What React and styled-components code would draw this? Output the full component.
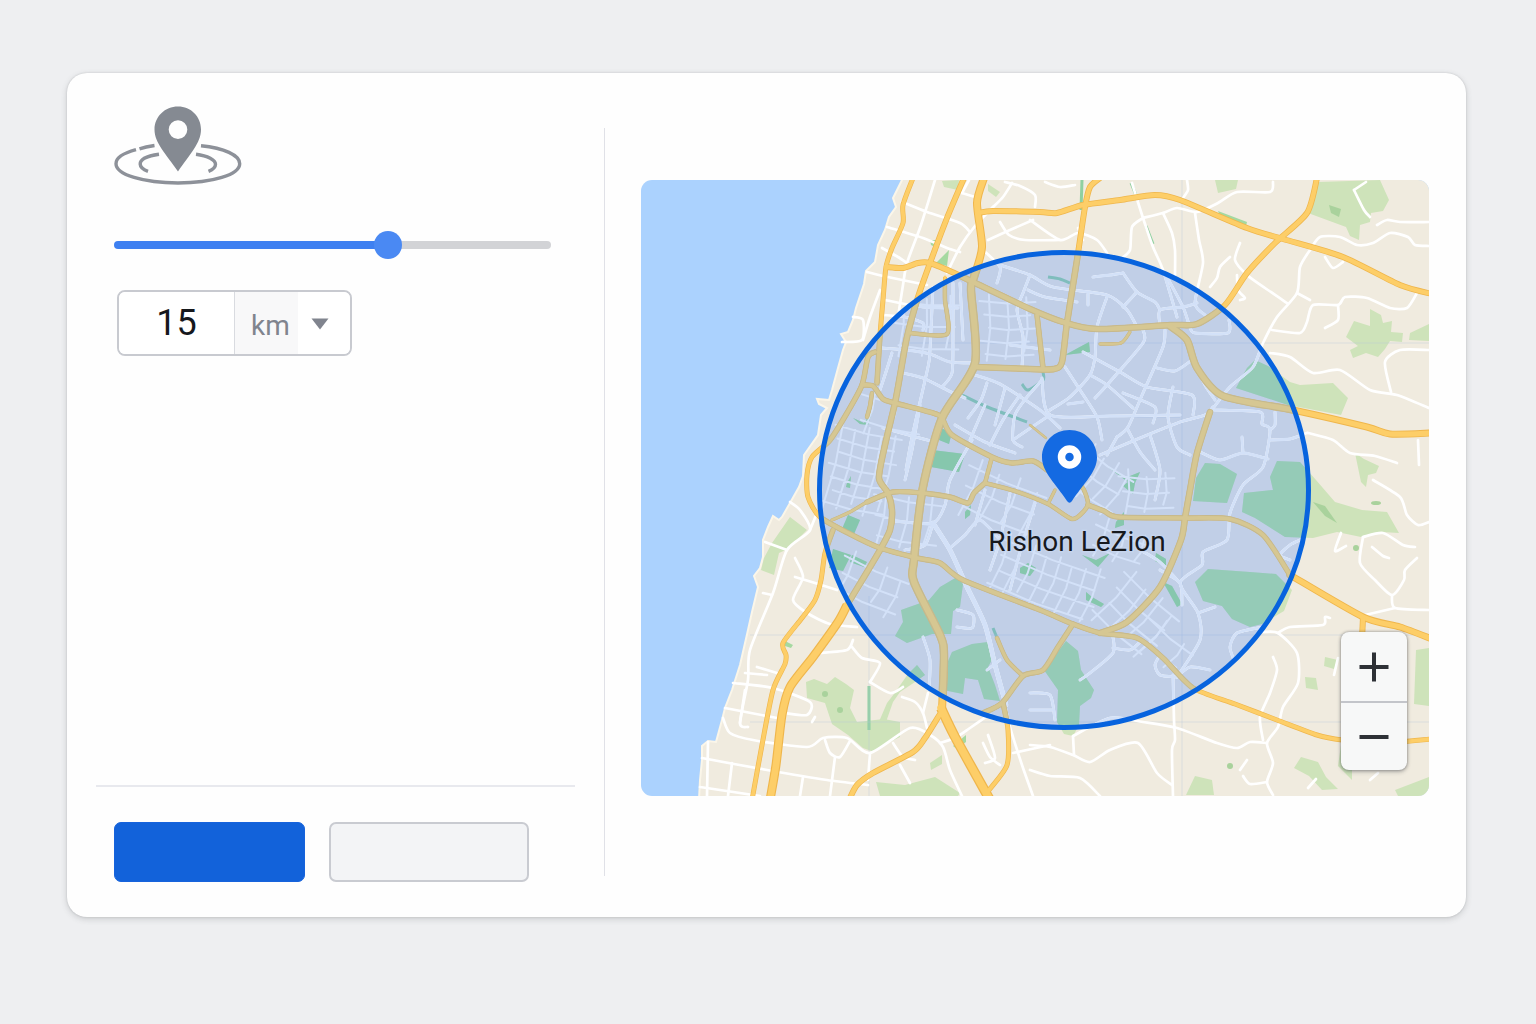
import React, { useState } from 'react';
import styled, { createGlobalStyle } from 'styled-components';

const GlobalStyle = createGlobalStyle`
  * {
    box-sizing: border-box;
  }

  body {
    margin: 0;
    background: #eeeff1;
    font-family: Roboto, "Liberation Sans", sans-serif;
  }
`;

const Page = styled.main`
  padding: 73px 70px 73px 67px;
`;

const Card = styled.section`
  display: grid;
  grid-template-columns: minmax(0, 537fr) 1px minmax(0, 861fr);
  background: #fefefe;
  border-radius: 20px;
  box-shadow: 0 0 2px rgba(60, 64, 72, 0.2), 0 2px 6px rgba(60, 64, 72, 0.2);
`;

const Settings = styled.form`
  display: flex;
  flex-direction: column;
  padding: 33px 29px 35px;
`;

const Fields = styled.div`
  flex: 1;
  display: flex;
  flex-direction: column;
  align-items: flex-start;
  padding: 0 24px 0 18px;
`;

const RadiusDrawing = styled.svg`
  display: block;
  width: 128px;
  height: 80px;
  margin-bottom: 45px;
`;

const Slider = styled.input`
  appearance: none;
  width: 100%;
  height: 28px;
  margin: 0 0 31px;
  background: none;
  cursor: pointer;

  &::-webkit-slider-runnable-track {
    height: 8px;
    border-radius: 4px;
    background: linear-gradient(to right, #3e80f1 var(--filled), #d2d3d6 var(--filled));
  }

  &::-webkit-slider-thumb {
    appearance: none;
    width: 28px;
    height: 28px;
    margin-top: -10px;
    border-radius: 50%;
    background: #4a89f3;
  }
`;

const Distance = styled.div`
  display: flex;
  width: 235px;
  height: 66px;
  margin-left: 3px;
  border: 2px solid #c8cad0;
  border-radius: 8px;
  overflow: hidden;
`;

const Amount = styled.input`
  appearance: textfield;
  width: 116px;
  padding: 0;
  border: none;
  border-right: 1px solid #d9dbe0;
  background: #ffffff;
  color: #16181c;
  font: 400 36px/40px Roboto, sans-serif;
  text-align: center;

  &::-webkit-inner-spin-button {
    appearance: none;
    display: none;
  }
`;

const UnitField = styled.div`
  position: relative;
  flex: 1;
`;

const Unit = styled.select`
  appearance: none;
  width: 100%;
  height: 100%;
  padding: 6px 0 0 16px;
  border: none;
  background: linear-gradient(to right, #f8f8f9 63px, #ffffff 63px);
  color: #80848e;
  font: 400 28px/32px Roboto, sans-serif;
`;

const Caret = styled.svg`
  position: absolute;
  top: 26px;
  right: 21px;
  width: 18px;
  height: 12px;
  pointer-events: none;
`;

const Actions = styled.div`
  display: flex;
  gap: 24px;
  padding: 35px 18px 0;
  border-top: 2px solid #e8e9ee;
`;

const ActionButton = styled.button`
  width: ${props => (props.$primary ? 191 : 200)}px;
  height: 60px;
  border: ${props => (props.$primary ? '1px solid #1763dc' : '2px solid #c9cbd1')};
  border-radius: 7px;
  background: ${props => (props.$primary ? '#1262da' : '#f3f4f6')};
  cursor: pointer;
`;

const Divider = styled.div`
  margin: 55px 0 41px;
  background: #e0e1e7;
`;

const MapPanel = styled.div`
  padding: 107px 37px 121px 36px;
`;

const MapFrame = styled.div`
  position: relative;
  border-radius: 11px;
  overflow: hidden;
`;

const MapDrawing = styled.svg`
  display: block;
  width: 100%;
  height: auto;
`;

const ZoomControls = styled.div`
  position: absolute;
  right: 22px;
  bottom: 26px;
  display: flex;
  flex-direction: column;
  width: 66px;
  border-radius: 8px;
  background: #f7f8f8;
  box-shadow: 0 0 3px rgba(50, 54, 60, 0.5), 0 2px 4px rgba(50, 54, 60, 0.3);
`;

const ZoomButton = styled.button`
  display: flex;
  align-items: center;
  justify-content: center;
  height: 69px;
  padding: 0;
  border: none;
  background: none;
  cursor: pointer;

  & + & {
    border-top: 2px solid #c3c5ca;
  }
`;

/* Map geometry. Every road is a flat "x,y x,y ..." list. */

const LAND =
  'M902,180 L893,198 L896,207 L889,217 L885,230 L878,245 L875,262 L866,271 L864,284 L856,308 L853,320 L848,332 L841,334 L846,342 L843,350 L838,368 L832,390 L829,400 L817,399 L819,404 L827,408 L821,415 L818,435 L804,455 L803,476 L799,487 L790,503 L782,517 L779,520 L773,516 L768,527 L763,540 L763,557 L760,568 L754,576 L758,587 L752,612 L748,630 L740,665 L732,690 L725,708 L722,720 L716,742 L708,741 L702,746 L702,760 L700,780 L699,800 L1432,800 L1432,176 L904,176 Z';

const PARKS = [
  'M1318,182 L1380,180 L1389,200 L1383,211 L1371,213 L1370,222 L1360,225 L1359,240 L1350,236 L1346,227 L1308,213 Z',
  'M1215,180 L1238,180 L1236,189 L1218,193 Z',
  'M942,181 L959,180 L958,190 L944,187 Z',
  'M988,184 L1000,192 L996,197 L988,191 Z',
  'M1370,309 L1381,315 L1383,323 L1392,321 L1391,332 L1403,333 L1402,342 L1390,341 L1385,349 L1378,357 L1366,353 L1353,358 L1350,350 L1358,346 L1346,337 L1354,321 L1370,326 Z',
  'M1410,333 L1429,324 L1429,341 L1409,340 Z',
  'M1255,360 L1268,366 L1290,382 L1300,385 L1333,383 L1348,398 L1341,415 L1288,405 L1236,388 L1247,368 Z',
  'M1205,463 L1220,464 L1237,474 L1227,503 L1193,501 L1196,478 Z',
  'M1277,461 L1300,462 L1316,480 L1335,502 L1362,510 L1387,512 L1399,533 L1382,532 L1361,537 L1337,532 L1313,538 L1285,537 L1255,518 L1242,512 L1244,493 L1273,490 L1270,477 Z',
  'M1208,569 L1250,572 L1276,574 L1292,590 L1284,611 L1262,624 L1250,627 L1232,619 L1222,606 L1203,601 L1195,582 Z',
  'M790,517 L807,530 L788,549 L779,553 L774,575 L761,570 L764,558 L772,543 Z',
  'M957,577 L963,584 L960,607 L953,611 L951,634 L932,634 L907,643 L895,636 L903,622 L901,610 L929,600 L940,587 Z',
  'M952,652 L972,644 L988,642 L993,658 L988,667 L995,685 L1000,701 L984,699 L978,680 L965,678 L963,694 L943,690 L945,668 Z',
  'M806,682 L814,679 L827,684 L835,677 L846,684 L854,690 L850,708 L857,722 L884,719 L900,722 L900,737 L886,744 L874,752 L863,748 L848,735 L832,724 L825,703 L807,698 Z',
  'M878,724 L887,703 L894,694 L908,674 L917,665 L925,675 L915,682 L900,692 L893,702 L886,722 Z',
  'M1066,641 L1078,651 L1081,670 L1094,690 L1091,698 L1080,706 L1079,725 L1073,736 L1064,734 L1057,722 L1058,690 L1044,670 Z',
  'M1301,757 L1318,762 L1326,777 L1338,789 L1322,790 L1309,776 L1294,768 Z',
  'M1195,776 L1212,780 L1214,795 L1186,795 Z',
  'M1395,790 L1429,777 L1429,796 L1398,796 Z',
  'M1342,738 L1352,770 L1352,780 L1338,766 Z',
  'M1416,650 L1429,648 L1429,706 L1414,704 Z',
  'M1305,677 L1316,678 L1318,690 L1306,688 Z',
  'M1325,657 L1338,660 L1334,669 L1324,666 Z',
  'M1355,453 L1364,459 L1379,466 L1376,473 L1368,475 L1366,487 L1361,482 Z',
  'M876,782 L905,785 L935,777 L960,793 L958,796 L880,796 Z',
  'M930,763 L942,755 L942,764 L931,770 Z',
];

const DEEP_PARKS = [
  'M932,450 L965,454 L959,472 L931,467 Z',
  'M940,428 L952,432 L949,444 L939,440 Z',
  'M848,515 L860,520 L854,534 L842,529 Z',
  'M833,549 L851,555 L843,571 L829,568 Z',
  'M852,555 L867,562 L864,567 L850,562 Z',
  'M1105,465 L1125,478 L1140,472 L1135,483 L1133,494 L1123,486 L1128,482 Z',
  'M1116,522 L1124,512 L1124,525 L1115,528 Z',
  'M1082,555 L1096,560 L1110,553 L1098,567 Z',
  'M1086,592 L1092,597 L1104,604 L1101,607 L1086,600 Z',
  'M1163,582 L1172,586 L1182,604 L1177,607 Z',
  'M1020,568 L1028,563 L1036,568 L1030,576 L1020,573 Z',
  'M1065,355 L1089,342 L1090,352 Z',
  'M965,512 L971,505 L970,515 L965,519 Z',
  'M930,240 L938,240 L937,248 L931,245 Z',
  'M936,263 L949,250 L947,266 L939,264 Z',
  'M853,418 L864,423 L872,412 L868,425 L860,424 Z',
  'M847,483 L851,476 L850,488 L846,487 Z',
  'M1218,211 L1247,222 L1246,226 L1220,216 Z',
  'M1156,553 L1166,559 L1166,566 L1155,561 Z',
  'M785,641 L793,645 L791,648 L785,646 Z',
  'M953,746 L966,735 L966,742 L957,749 Z',
];

const GREENWAYS = [
  '962,395 985,406 1027,422',
  '1043,372 1043,380 1028,390 1022,384',
  '1131,183 1138,200',
  '1146,226 1153,244',
  '1082,180 1081,210',
  '869,686 869,730',
  '993,628 1000,645',
  '1048,277 1060,279 1070,283',
];

const HIGHWAYS = [
  { w: 9, p: '770,800 776,765 782,715 790,687 813,657 838,622 847,605' },
  { w: 6, p: '847,605 864,577 880,550 890,530 892,510 888,493 879,478 885,445 895,403 901,370 907,337 918,297 930,263 947,218 964,178' },
  { w: 5, p: '752,800 762,745 773,690 785,664 786,655 783,643 802,618 815,600 821,580 825,553 833,530' },
  { w: 5, p: '913,178 903,205 903,223 892,248 886,267 883,300 880,335 877,383' },
  { w: 5, p: '875,352 868,357 862,385 847,413 830,440 812,457 807,475 808,497 820,517 850,534 880,548 917,558 940,563 963,580 1040,610 1073,624 1100,633 1137,638 1163,658 1193,688 1235,704 1277,720 1317,735 1342,740 1380,743 1432,739' },
  { w: 5, p: '862,385 873,386 883,399 895,403 933,413 942,418 952,435 992,457 1012,463 1033,461 1047,470' },
  { w: 8, p: '984,178 977,203 982,247 974,277 971,290 975,363 942,418 923,487 914,560 914,582 940,635 944,655 942,710' },
  { w: 10, p: '941,708 955,737 990,800' },
  { w: 6, p: '978,213 993,211 1040,212 1057,213 1083,205 1120,200 1155,195 1180,200 1247,228 1283,239 1343,257 1400,285 1432,294' },
  { w: 6, p: '1317,178 1307,213 1275,243 1247,273 1225,305 1197,324 1170,325 1097,329 1063,322 1030,309 973,282 952,272 930,263 918,263 903,268 886,267' },
  { w: 6, p: '1100,178 1090,187 1085,207 1077,260 1067,323 1062,362 1054,369 1030,369 975,367' },
  { w: 5, p: '1037,315 1043,368' },
  { w: 7, p: '1170,326 1187,340 1197,368 1223,396 1293,410 1367,427 1390,434 1432,433' },
  { w: 6, p: '1210,412 1197,453 1190,490 1185,518 1181,540 1160,587 1127,622 1100,633' },
  { w: 3, p: '832,520 850,512 870,500' },
  { w: 5, p: '867,502 893,492 923,493 950,497 968,503 974,493 985,483' },
  { w: 4, p: '985,483 992,457' },
  { w: 4, p: '985,483 1015,491 1048,504 1072,519 1084,511 1088,503 1084,490 1078,482' },
  { w: 3, p: '1048,504 1055,490' },
  { w: 5, p: '1088,505 1104,511 1118,517 1185,518 1230,519 1263,535 1290,575' },
  { w: 7, p: '1290,575 1363,617 1400,627 1432,639' },
  { w: 6, p: '1363,617 1362,640' },
  { w: 5, p: '1073,624 1058,647 1043,670 1023,676 1002,703 983,713' },
  { w: 4, p: '997,638 1007,660 1023,676' },
  { w: 5, p: '1003,703 1008,730 1007,765 989,790' },
  { w: 6, p: '940,714 925,738 913,752 873,773 857,785 849,800' },
  { w: 4, p: '945,277 945,300 947,334 910,333' },
  { w: 4, p: '872,393 870,406 867,417' },
  { w: 3, p: '1130,332 1121,343 1100,344' },
  { w: 2, p: '1030,425 1046,438' },
];

const STREETS = [
  // north, along the coast
  '935,180 921,225 907,263 903,285 898,317',
  '902,202 927,212 960,223 970,232',
  '887,227 923,238 947,248 960,252',
  '882,248 898,257 907,263',
  '867,272 883,276 927,285',
  '993,207 975,226 960,247 947,273',
  '1012,183 1003,197 993,207',
  '1005,182 1020,186 1035,195 1035,207',
  '962,193 975,197',
  '969,180 962,193',
  '988,240 1010,230 1033,220',
  '983,250 1000,267 997,283',
  '1000,222 1009,235 1025,240 1060,240',
  '853,317 863,320 862,340 842,342',
  '880,290 870,317 863,340',
  '885,300 923,307 958,308',
  '883,315 905,317 923,323 923,330',
  '933,287 930,350 928,367 912,437 906,470',
  '953,283 953,337 952,373 942,387',
  '960,283 963,340',
  '882,348 907,350 930,354 950,362 975,363',
  '892,353 885,375 880,390',
  '903,373 923,378 947,390 965,398',
  '920,405 912,450 905,480',
  '883,428 912,436 935,442',
  '1000,265 1030,275 1053,287 1107,295 1127,310 1137,327',
  '1028,290 1045,297 1077,302',
  '1030,275 1023,293 1017,310 1023,337 1022,367',
  '1088,294 1088,305',
  // fan of streets north of the pin
  '1107,297 1097,327 1095,357 1090,375 1070,397 1050,410',
  '1065,367 1080,390 1097,417 1102,440',
  '1083,352 1120,372 1147,387 1192,395 1193,415',
  '1143,330 1143,343 1107,385 1095,398',
  '1165,330 1163,347 1143,393 1128,427 1117,437',
  '1090,375 1107,385 1133,408',
  '1123,393 1155,407 1153,423',
  '1042,378 1050,415 1110,416 1180,415',
  '1173,387 1168,417 1177,447 1190,455',
  '1157,368 1175,371 1192,360',
  '1213,407 1205,415 1180,422 1140,438 1100,455',
  '1160,325 1160,310 1183,307 1197,303',
  '1137,292 1123,307',
  '1123,273 1137,292 1155,302 1160,310',
  '1167,277 1183,307 1190,327 1195,333 1228,333 1229,320',
  '1093,277 1110,275 1123,273',
  '975,375 1000,384 1040,410 1060,428',
  '987,383 981,400 968,418',
  '1005,388 995,425',
  '1020,395 1003,420 990,445',
  '1042,380 1027,397 1015,415 1013,440 1022,447',
  '985,405 970,440',
  '1013,440 1035,425 1050,415',
  '955,425 985,442 1015,453',
  '1128,430 1140,452 1155,470',
  '1117,437 1107,455',
  '1150,435 1160,470 1155,500',
  '1197,368 1205,385 1215,400',
  '1010,345 1050,350',
  '1068,404 1083,402',
  // north east
  '1143,218 1163,213 1177,208 1197,212 1218,203 1237,192 1270,192 1273,182',
  '1143,218 1132,227 1130,250 1122,258',
  '1132,183 1143,218 1153,247 1163,270 1177,317',
  '1163,213 1172,233 1175,250 1175,275',
  '1195,213 1199,240 1203,263 1195,303 1205,315',
  '1030,220 1060,240 1078,233 1097,240 1107,253',
  '1083,240 1078,228',
  '1240,243 1235,260 1247,275 1265,288 1287,303',
  '1230,257 1220,267 1217,278 1210,287',
  '1237,275 1238,290 1245,298 1240,300',
  '1187,180 1188,190 1183,198',
  '1045,182 1060,187 1075,185',
  '1429,246 1415,245 1408,237 1390,233 1373,243 1357,245 1340,237 1320,237 1310,250 1300,267 1297,293 1277,317 1263,343 1253,367 1230,387 1214,407',
  '1377,225 1387,220 1400,222 1429,222',
  '1272,330 1300,333 1307,322 1313,305 1338,305 1345,297 1367,298 1390,308 1407,308 1417,293',
  '1338,305 1338,320 1325,328',
  '1297,293 1310,300',
  '1325,257 1333,268 1343,262',
  '1354,190 1364,210 1370,217',
  '1354,190 1366,182',
  '1270,353 1290,357 1313,373 1340,370 1370,390 1397,395 1429,408',
  '1429,350 1400,350 1385,362 1391,392',
  '1308,433 1333,440 1350,453 1375,456 1397,463',
  '1418,440 1419,465',
  // east side of the circle
  '1213,410 1260,412 1262,424 1270,430 1263,467 1243,485 1230,513 1227,540 1203,552 1202,565 1180,583 1198,613 1200,640 1177,677',
  '1270,440 1290,439 1307,433',
  '1200,452 1220,460 1243,453 1268,459',
  '1242,437 1243,453',
  '1275,412 1275,425 1270,430',
  '1198,613 1215,607',
  '1263,627 1237,633 1230,647 1234,660',
  '1290,560 1280,555 1290,545 1300,540',
  '1160,570 1180,583 1182,605',
  '1140,550 1160,562 1180,583',
  // south east
  '1373,480 1400,497 1407,515 1418,525 1429,522',
  '1363,537 1360,563 1375,580 1392,595 1404,580 1405,570 1417,558',
  '1392,595 1395,608 1429,610',
  '1395,608 1365,615',
  '1363,537 1383,533 1403,545 1415,547',
  '1341,533 1335,551 1346,546',
  '1372,547 1383,556 1389,558',
  '1263,632 1278,633 1297,653 1298,683 1283,707 1278,727 1267,743 1273,763 1267,782 1273,795',
  '1278,633 1290,627 1323,625 1325,617 1330,618',
  '1273,657 1277,670 1270,693 1260,717 1263,740',
  '1267,782 1250,784 1243,776',
  '1240,770 1247,760',
  '1338,658 1334,675',
  '1308,788 1316,779',
  '1370,780 1378,773',
  '1030,770 1050,776 1080,778 1100,796',
  '1030,745 1050,747 1073,755 1090,762 1110,750 1138,743 1157,773 1172,785',
  '1073,736 1110,718 1143,722 1177,728 1217,743 1237,748 1250,742 1267,743',
  '1073,736 1074,755',
  '1173,675 1174,720 1175,740 1172,750 1173,796',
  '1113,637 1113,653 1090,673 1080,680',
  '1113,648 1130,650 1140,642',
  '1177,677 1160,675 1155,665 1160,655',
  '1177,677 1190,667 1210,670',
  '1005,705 1010,727 1022,765 1033,796',
  '1013,753 1050,745',
  '983,743 990,757 1000,765',
  '988,735 995,758 985,763',
  // south west
  '790,502 800,510 810,530 787,550 773,593 750,650 748,680 740,723 748,727',
  '765,542 787,550',
  '810,530 817,513',
  '763,593 772,595',
  '795,558 803,577 793,600 807,613 830,624 857,627',
  '795,577 815,583 837,590',
  '733,683 773,688 810,702 807,715 785,713',
  '725,708 777,718',
  '723,718 730,733 753,740 807,747 823,738 847,738 870,753 910,728 930,735 943,747 950,770 962,796',
  '825,740 830,753 840,757 850,741',
  '702,758 767,770 827,780 868,785',
  '708,742 707,796',
  '732,763 728,796',
  '700,787 760,796',
  '835,757 830,796',
  '803,777 800,796',
  '870,753 868,780',
  '870,682 890,693 903,687',
  '820,653 847,650 853,640',
  '852,647 862,658 880,663 870,682',
  '902,697 915,702 923,713 927,728',
  '923,713 928,693',
  '757,667 777,673',
  '745,673 767,675',
  '812,722 815,717',
  '893,743 903,757 915,760',
  '900,765 910,783',
  '740,723 745,690',
  '940,743 955,738 970,728 990,714',
  '923,637 930,660 929,690',
  '957,610 973,615 972,628 957,627',
  '1000,660 987,670',
  '1030,693 1050,695 1055,720',
  '1030,710 1052,710',
  '893,521 933,523 945,505 950,480 972,440',
  '933,523 925,545 905,550',
  '950,548 965,535 980,520 1000,540',
  '985,490 975,525',
  '1010,493 1000,540 990,570',
  '1035,503 1022,545 1010,590',
];

const AVENUES = ['933,523 950,550 967,587 985,625 995,665 1006,705'];

// blocks of regular streets: centre, size, tilt and number of streets each way
const BLOCKS = [
  { x: 860, y: 470, w: 68, h: 90, tilt: 13, cols: 5, rows: 7 },
  { x: 1007, y: 328, w: 56, h: 66, tilt: 1, cols: 3, rows: 5 },
  { x: 925, y: 325, w: 70, h: 66, tilt: 4, cols: 3, rows: 3 },
  { x: 870, y: 585, w: 70, h: 50, tilt: 24, cols: 4, rows: 3 },
  { x: 1045, y: 580, w: 110, h: 62, tilt: 21, cols: 8, rows: 4 },
  { x: 1135, y: 615, w: 74, h: 66, tilt: 42, cols: 4, rows: 4 },
  { x: 905, y: 520, w: 70, h: 60, tilt: 10, cols: 3, rows: 3 },
  { x: 1000, y: 500, w: 84, h: 60, tilt: 23, cols: 4, rows: 3 },
  { x: 1146, y: 492, w: 56, h: 44, tilt: 2, cols: 3, rows: 3 },
  { x: 1098, y: 480, w: 60, h: 56, tilt: 35, cols: 4, rows: 3 },
  { x: 1120, y: 545, w: 60, h: 40, tilt: 22, cols: 3, rows: 2 },
  { x: 893, y: 415, w: 70, h: 50, tilt: 14, cols: 3, rows: 2 },
  { x: 1165, y: 645, w: 56, h: 40, tilt: 40, cols: 2, rows: 2 },
];

const toPoints = list => list.split(' ').map(pair => pair.split(',').map(Number));

// rounded line that still passes through every point
const roadPath = list => {
  const pts = toPoints(list);
  return pts.reduce((d, [x, y], i) => {
    if (i === 0) return `M${x},${y}`;
    const [x0, y0] = pts[i - 1];
    const [xa, ya] = pts[i - 2] || pts[i - 1];
    const [xb, yb] = pts[i + 1] || pts[i];
    return `${d} C${x0 + (x - xa) / 8},${y0 + (y - ya) / 8} ${x - (xb - x0) / 8},${y - (yb - y0) / 8} ${x},${y}`;
  }, '');
};

const blockPath = ({ w, h, cols, rows }) => {
  let d = '';
  for (let i = 0; i < cols; i++) {
    const x = -w / 2 + (w * (i + 0.5)) / cols;
    const cut = (i * 7) % 12;
    d += `M${x},${-h / 2 + cut} L${x + 2},0 L${x - 1},${h / 2 - ((cut * 5) % 11)} `;
  }
  for (let i = 0; i < rows; i++) {
    const y = -h / 2 + (h * (i + 0.5)) / rows;
    const cut = (i * 5) % 13;
    d += `M${-w / 2 + cut},${y} L0,${y + 2} L${w / 2 - ((cut * 3) % 10)},${y} `;
  }
  return d;
};

const RadiusIcon = () => (
  <RadiusDrawing viewBox="114 106 128 80" aria-hidden="true">
    <g fill="none" stroke="#8d9199" strokeWidth="3.4">
      <path d="M154.500,145.500 C149,146.300 144,147.300 139.500,148.800" />
      <path d="M136,149.700 C123,153.200 116,158.200 116,163.700 C116,174.700 143.500,183 178,183 C212.500,183 239.700,174.700 239.700,163.700 C239.700,155.200 224,148 201,145.700" />
      <path d="M159,154.200 C147,155.800 140,159.700 140.200,164.200 C140.300,167.200 143,169.600 148,171.300" />
      <path d="M196,154.200 C208,155.800 215.500,160 215.500,164.300 C215.500,167.200 213,169.600 208.500,171.300" />
    </g>
    <path
      fill="#858a92"
      fillRule="evenodd"
      d="M178,106.500 C191,106.500 201,116.500 201,129.500 C201,143 190,154 178,171.500 C166,154 154.500,143 154.500,129.500 C154.500,116.500 165,106.500 178,106.500 Z M178,120.300 A9.300,9.300 0 1 0 178,138.900 A9.300,9.300 0 1 0 178,120.300 Z"
    />
  </RadiusDrawing>
);

const CityMap = () => (
  <MapDrawing viewBox="641 180 788 616" role="img" aria-label="Rishon LeZion">
    <clipPath id="radius-area">
      <ellipse cx="1064" cy="490" rx="244.500" ry="237.500" />
    </clipPath>
    <rect x="641" y="180" width="788" height="616" fill="#abd2fe" />
    <path d={LAND} fill="#f0ebdf" stroke="#fbf6e9" strokeWidth="2" />
    <g fill="#cee3ba">{PARKS.map(d => <path key={d} d={d} />)}</g>
    <g fill="#a5d9a0">{DEEP_PARKS.map(d => <path key={d} d={d} />)}</g>
    <g fill="#a9d29c">
      <path d="M1329,205 L1341,209 L1339,217 L1331,213 Z" />
      <path d="M1313,502 L1325,506 L1337,523 L1325,516 Z" />
      <circle cx="825" cy="694" r="3" />
      <circle cx="840" cy="710" r="3" />
      <circle cx="1230" cy="766" r="3" />
      <circle cx="1356" cy="548" r="3" />
      <ellipse cx="1376" cy="503" rx="5" ry="2" />
    </g>
    <g fill="none" stroke="#8fd0a0" strokeWidth="3">
      {GREENWAYS.map(p => <path key={p} d={roadPath(p)} />)}
    </g>
    <path
      d="M869,596 V796 M1182,180 V796 M900,343 H1429 M750,635 H1429 M750,722 H1429 M1050,417 H1180"
      stroke="#b8c9dc"
      strokeOpacity="0.4"
      fill="none"
    />

    {/* tint of the selected radius; parks and streets inside it stay a bit stronger */}
    <ellipse cx="1064" cy="490" rx="244.500" ry="237.500" fill="#5c96fa" fillOpacity="0.32" />
    <g clipPath="url(#radius-area)" fill="#7dcb9c" fillOpacity="0.45">
      {PARKS.map(d => <path key={d} d={d} />)}
      {DEEP_PARKS.map(d => <path key={d} d={d} />)}
    </g>

    <g fill="none" stroke="#ffffff" strokeLinecap="round" strokeLinejoin="round">
      {STREETS.map(p => <path key={p} d={roadPath(p)} strokeWidth="2.700" />)}
      {AVENUES.map(p => <path key={p} d={roadPath(p)} strokeWidth="4.500" />)}
    </g>
    <g clipPath="url(#radius-area)" fill="none" stroke="#d3e1f8" strokeLinecap="round" strokeLinejoin="round">
      {STREETS.map(p => <path key={p} d={roadPath(p)} strokeWidth="2.800" />)}
      {AVENUES.map(p => <path key={p} d={roadPath(p)} strokeWidth="4.600" />)}
      {BLOCKS.map(block => (
        <path
          key={`${block.x}-${block.y}`}
          d={blockPath(block)}
          strokeWidth="2"
          transform={`translate(${block.x} ${block.y}) rotate(${block.tilt})`}
        />
      ))}
    </g>

    <g fill="none" stroke="#efb64c" strokeLinejoin="round">
      {HIGHWAYS.map(({ w, p }) => <path key={p} d={roadPath(p)} strokeWidth={w} />)}
    </g>
    <g fill="none" stroke="#fdce68" strokeLinejoin="round" strokeLinecap="round">
      {HIGHWAYS.map(({ w, p }) => <path key={p} d={roadPath(p)} strokeWidth={w * 0.75} />)}
    </g>
    <g clipPath="url(#radius-area)" fill="none" strokeLinejoin="round" strokeLinecap="round">
      <g stroke="#c5b98e">
        {HIGHWAYS.map(({ w, p }) => <path key={p} d={roadPath(p)} strokeWidth={w + 0.5} />)}
      </g>
      <g stroke="#d6c792">
        {HIGHWAYS.map(({ w, p }) => <path key={p} d={roadPath(p)} strokeWidth={w * 0.75} />)}
      </g>
    </g>

    <ellipse
      cx="1064"
      cy="490"
      rx="244.500"
      ry="237.500"
      fill="none"
      stroke="#0763de"
      strokeWidth="5"
    />
    <path
      d="M1069.500,430 C1085,430 1097,442 1097,457.500 C1097,472 1083,484 1072,501 Q1069.500,504.500 1067,501 C1056,484 1042,472 1042,457.500 C1042,442 1054,430 1069.500,430 Z"
      fill="#146ae2"
    />
    <circle cx="1069.500" cy="457" r="8" fill="none" stroke="#ffffff" strokeWidth="7.500" />
    <text
      x="1077"
      y="551"
      textAnchor="middle"
      fontFamily="Roboto, sans-serif"
      fontSize="28"
      fill="#17191d"
      stroke="#c8d7f0"
      strokeOpacity="0.7"
      strokeWidth="3"
      paintOrder="stroke"
    >
      Rishon LeZion
    </text>
  </MapDrawing>
);

const MIN_RADIUS = 1;
const MAX_RADIUS = 23;

const App = () => {
  const [radius, setRadius] = useState(15);
  const filled = ((radius - MIN_RADIUS) / (MAX_RADIUS - MIN_RADIUS)) * 100;
  const onRadiusChange = event => setRadius(Number(event.target.value));

  return (
    <Page>
      <GlobalStyle />
      <Card>
        <Settings onSubmit={event => event.preventDefault()}>
          <Fields>
            <RadiusIcon />
            <Slider
              type="range"
              aria-label="Radius"
              min={MIN_RADIUS}
              max={MAX_RADIUS}
              value={radius}
              onChange={onRadiusChange}
              style={{ '--filled': `${filled}%` }}
            />
            <Distance>
              <Amount type="number" aria-label="Distance" value={radius} onChange={onRadiusChange} />
              <UnitField>
                <Unit aria-label="Unit" defaultValue="km">
                  <option value="km">km</option>
                </Unit>
                <Caret viewBox="0 0 18 12" aria-hidden="true">
                  <path d="M0.500,0.500 H17.500 L9,11.500 Z" fill="#80848e" />
                </Caret>
              </UnitField>
            </Distance>
          </Fields>
          <Actions>
            <ActionButton type="submit" aria-label="Apply" $primary />
            <ActionButton type="button" aria-label="Cancel" />
          </Actions>
        </Settings>
        <Divider />
        <MapPanel>
          <MapFrame>
            <CityMap />
            <ZoomControls>
              <ZoomButton type="button" aria-label="Zoom in">
                <svg width="30" height="30" viewBox="0 0 30 30" aria-hidden="true">
                  <path d="M15,0.500 V29.500 M0.500,15 H29.500" stroke="#2e3136" strokeWidth="4" />
                </svg>
              </ZoomButton>
              <ZoomButton type="button" aria-label="Zoom out">
                <svg width="30" height="30" viewBox="0 0 30 30" aria-hidden="true">
                  <path d="M0.500,15 H29.500" stroke="#2e3136" strokeWidth="4" />
                </svg>
              </ZoomButton>
            </ZoomControls>
          </MapFrame>
        </MapPanel>
      </Card>
    </Page>
  );
};

export default App;
